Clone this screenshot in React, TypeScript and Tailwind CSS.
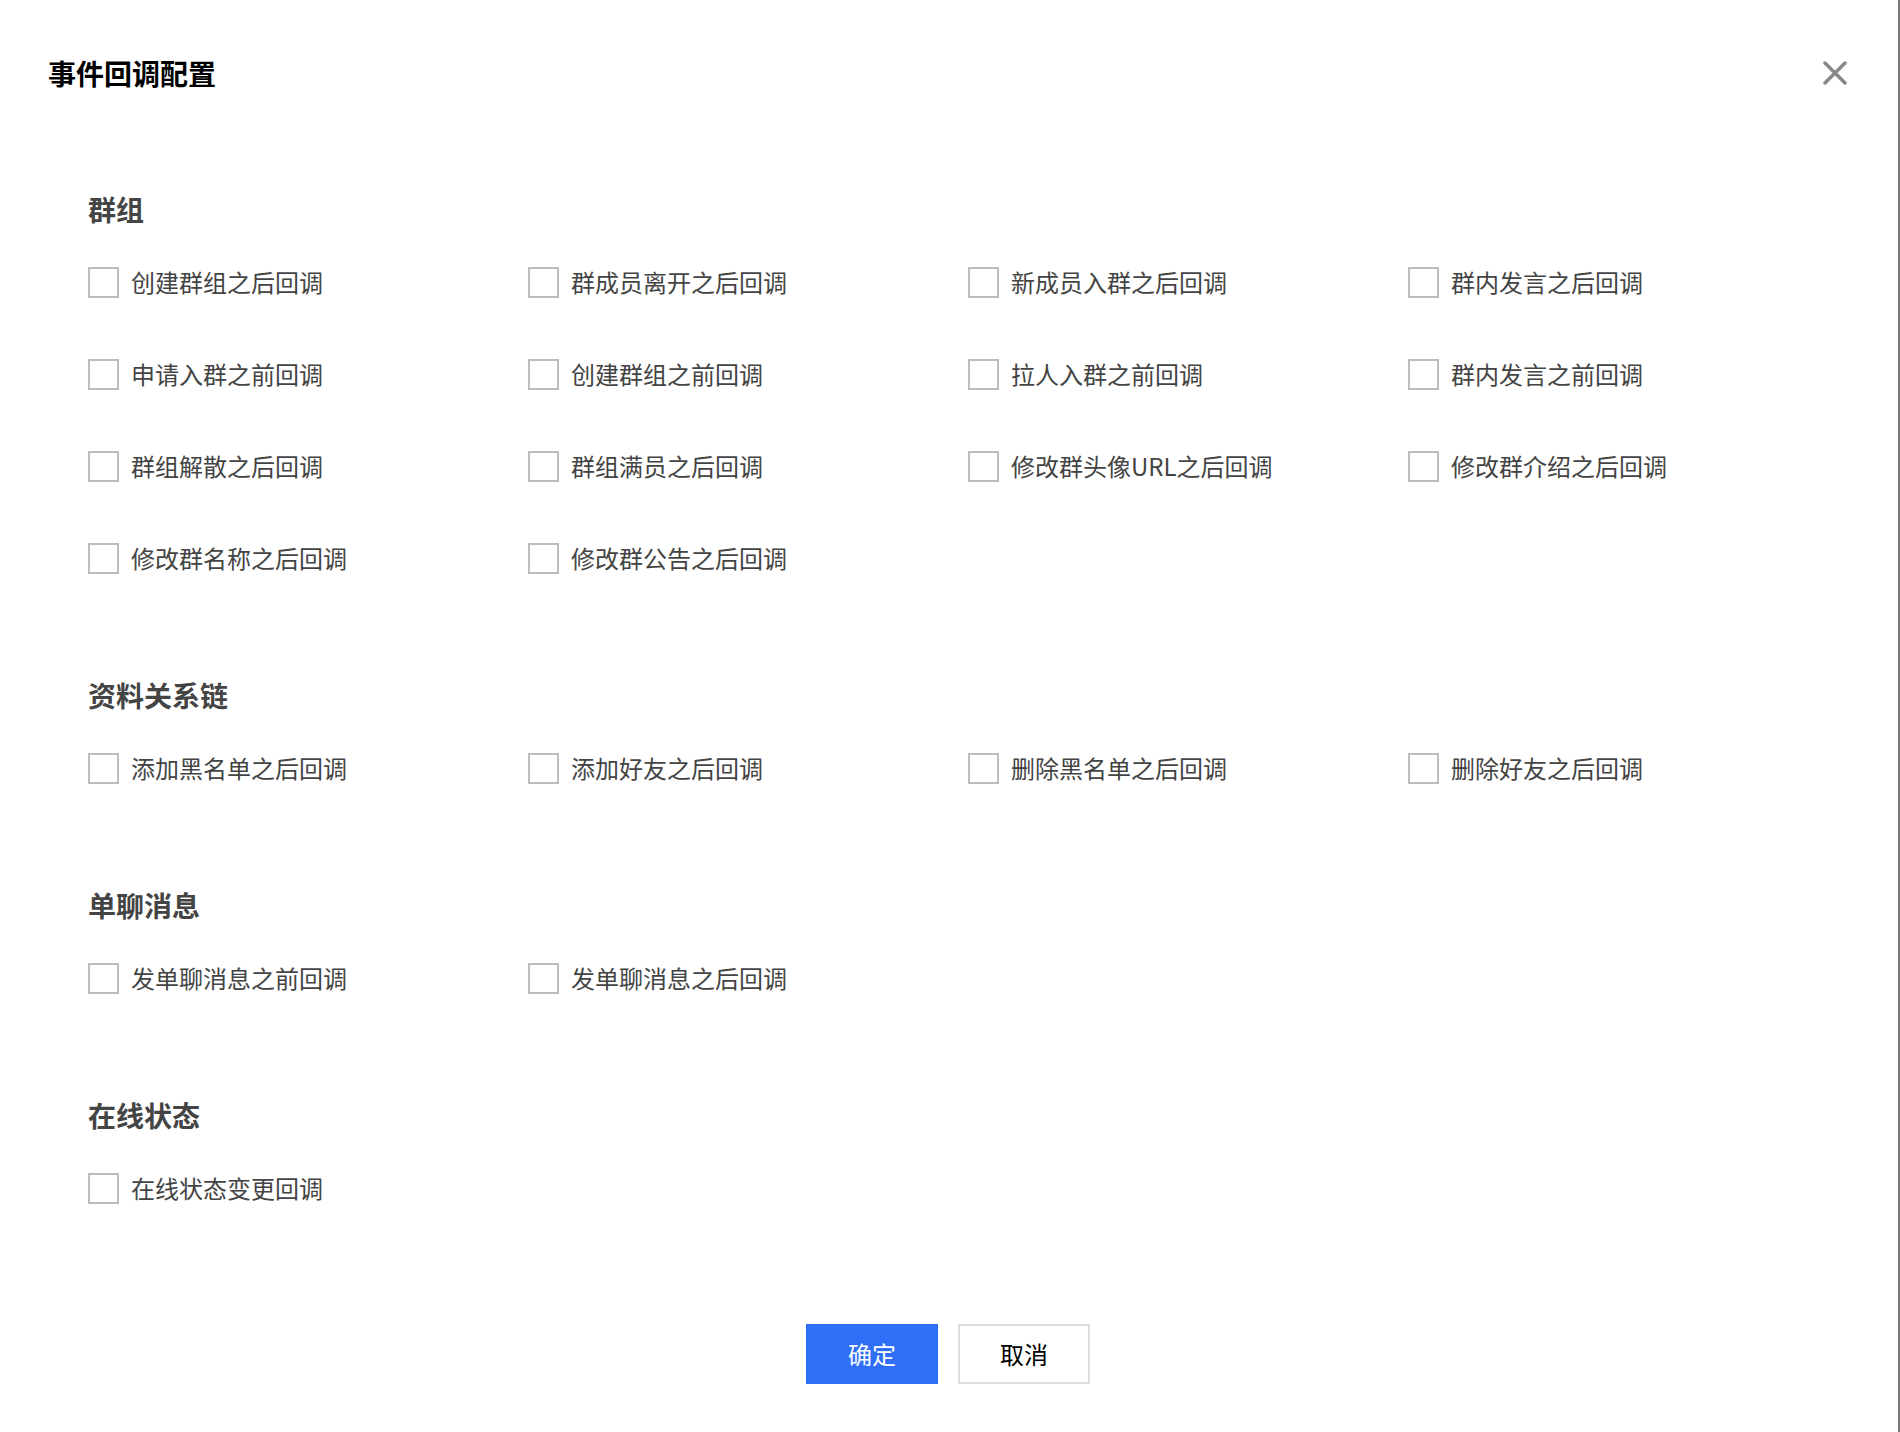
import React from "react";

type Section = {
  title: string;
  items: string[];
};

const sections: Section[] = [
  {
    title: "群组",
    items: [
      "创建群组之后回调",
      "群成员离开之后回调",
      "新成员入群之后回调",
      "群内发言之后回调",
      "申请入群之前回调",
      "创建群组之前回调",
      "拉人入群之前回调",
      "群内发言之前回调",
      "群组解散之后回调",
      "群组满员之后回调",
      "修改群头像URL之后回调",
      "修改群介绍之后回调",
      "修改群名称之后回调",
      "修改群公告之后回调",
    ],
  },
  {
    title: "资料关系链",
    items: ["添加黑名单之后回调", "添加好友之后回调", "删除黑名单之后回调", "删除好友之后回调"],
  },
  {
    title: "单聊消息",
    items: ["发单聊消息之前回调", "发单聊消息之后回调"],
  },
  {
    title: "在线状态",
    items: ["在线状态变更回调"],
  },
];

function CheckItem({ label }: { label: string }) {
  const [checked, setChecked] = React.useState(false);
  return (
    <label className="flex h-[46px] cursor-pointer items-center gap-[12px]">
      <span
        onClick={() => setChecked(!checked)}
        className={
          checked
            ? "h-[31px] w-[31px] shrink-0 border-2 border-[#2f6ef6] bg-[#2f6ef6]"
            : "h-[31px] w-[31px] shrink-0 border-2 border-[#bdbdbd] bg-white"
        }
      />
      <span className="text-[24px] leading-[32px] text-[#444]">{label}</span>
    </label>
  );
}

export default function App() {
  return (
    <div
      className="flex h-[1432px] w-full bg-white"
      style={{ fontFamily: '"Noto Sans CJK SC", "Noto Sans", sans-serif' }}
    >
      <div className="flex flex-1 flex-col">
        <div className="mt-[53px] flex h-[40px] items-center justify-between pl-[48px] pr-[51px]">
          <h1 className="text-[28px] font-bold leading-[40px] text-black">事件回调配置</h1>
          <button className="flex h-[24px] w-[24px] items-center justify-center text-[#888]">
            <svg width="24" height="24" viewBox="0 0 24 24" fill="none">
              <path d="M2 2L22 22M22 2L2 22" stroke="currentColor" strokeWidth="3.5" strokeLinecap="round" />
            </svg>
          </button>
        </div>

        <div className="pl-[88px]">
          {sections.map((section, i) => (
            <div key={section.title} className={i === 0 ? "mt-[96px]" : "mt-[94px]"}>
              <h2 className="h-[40px] text-[28px] font-bold leading-[40px] text-[#444]">{section.title}</h2>
              <div className="mt-[30px] grid grid-cols-[repeat(4,440px)] gap-y-[46px]">
                {section.items.map((item) => (
                  <CheckItem key={item} label={item} />
                ))}
              </div>
            </div>
          ))}
        </div>

        <div className="mt-[113px] flex justify-center gap-[20px] pr-[2px]">
          <button className="h-[60px] w-[132px] bg-[#2f6ef6] text-[24px] text-white">确定</button>
          <button className="h-[60px] w-[132px] border-2 border-[#dddddd] bg-white text-[24px] text-black">
            取消
          </button>
        </div>
      </div>
      <div className="w-[2px] bg-[#7a7a7a]" />
    </div>
  );
}
